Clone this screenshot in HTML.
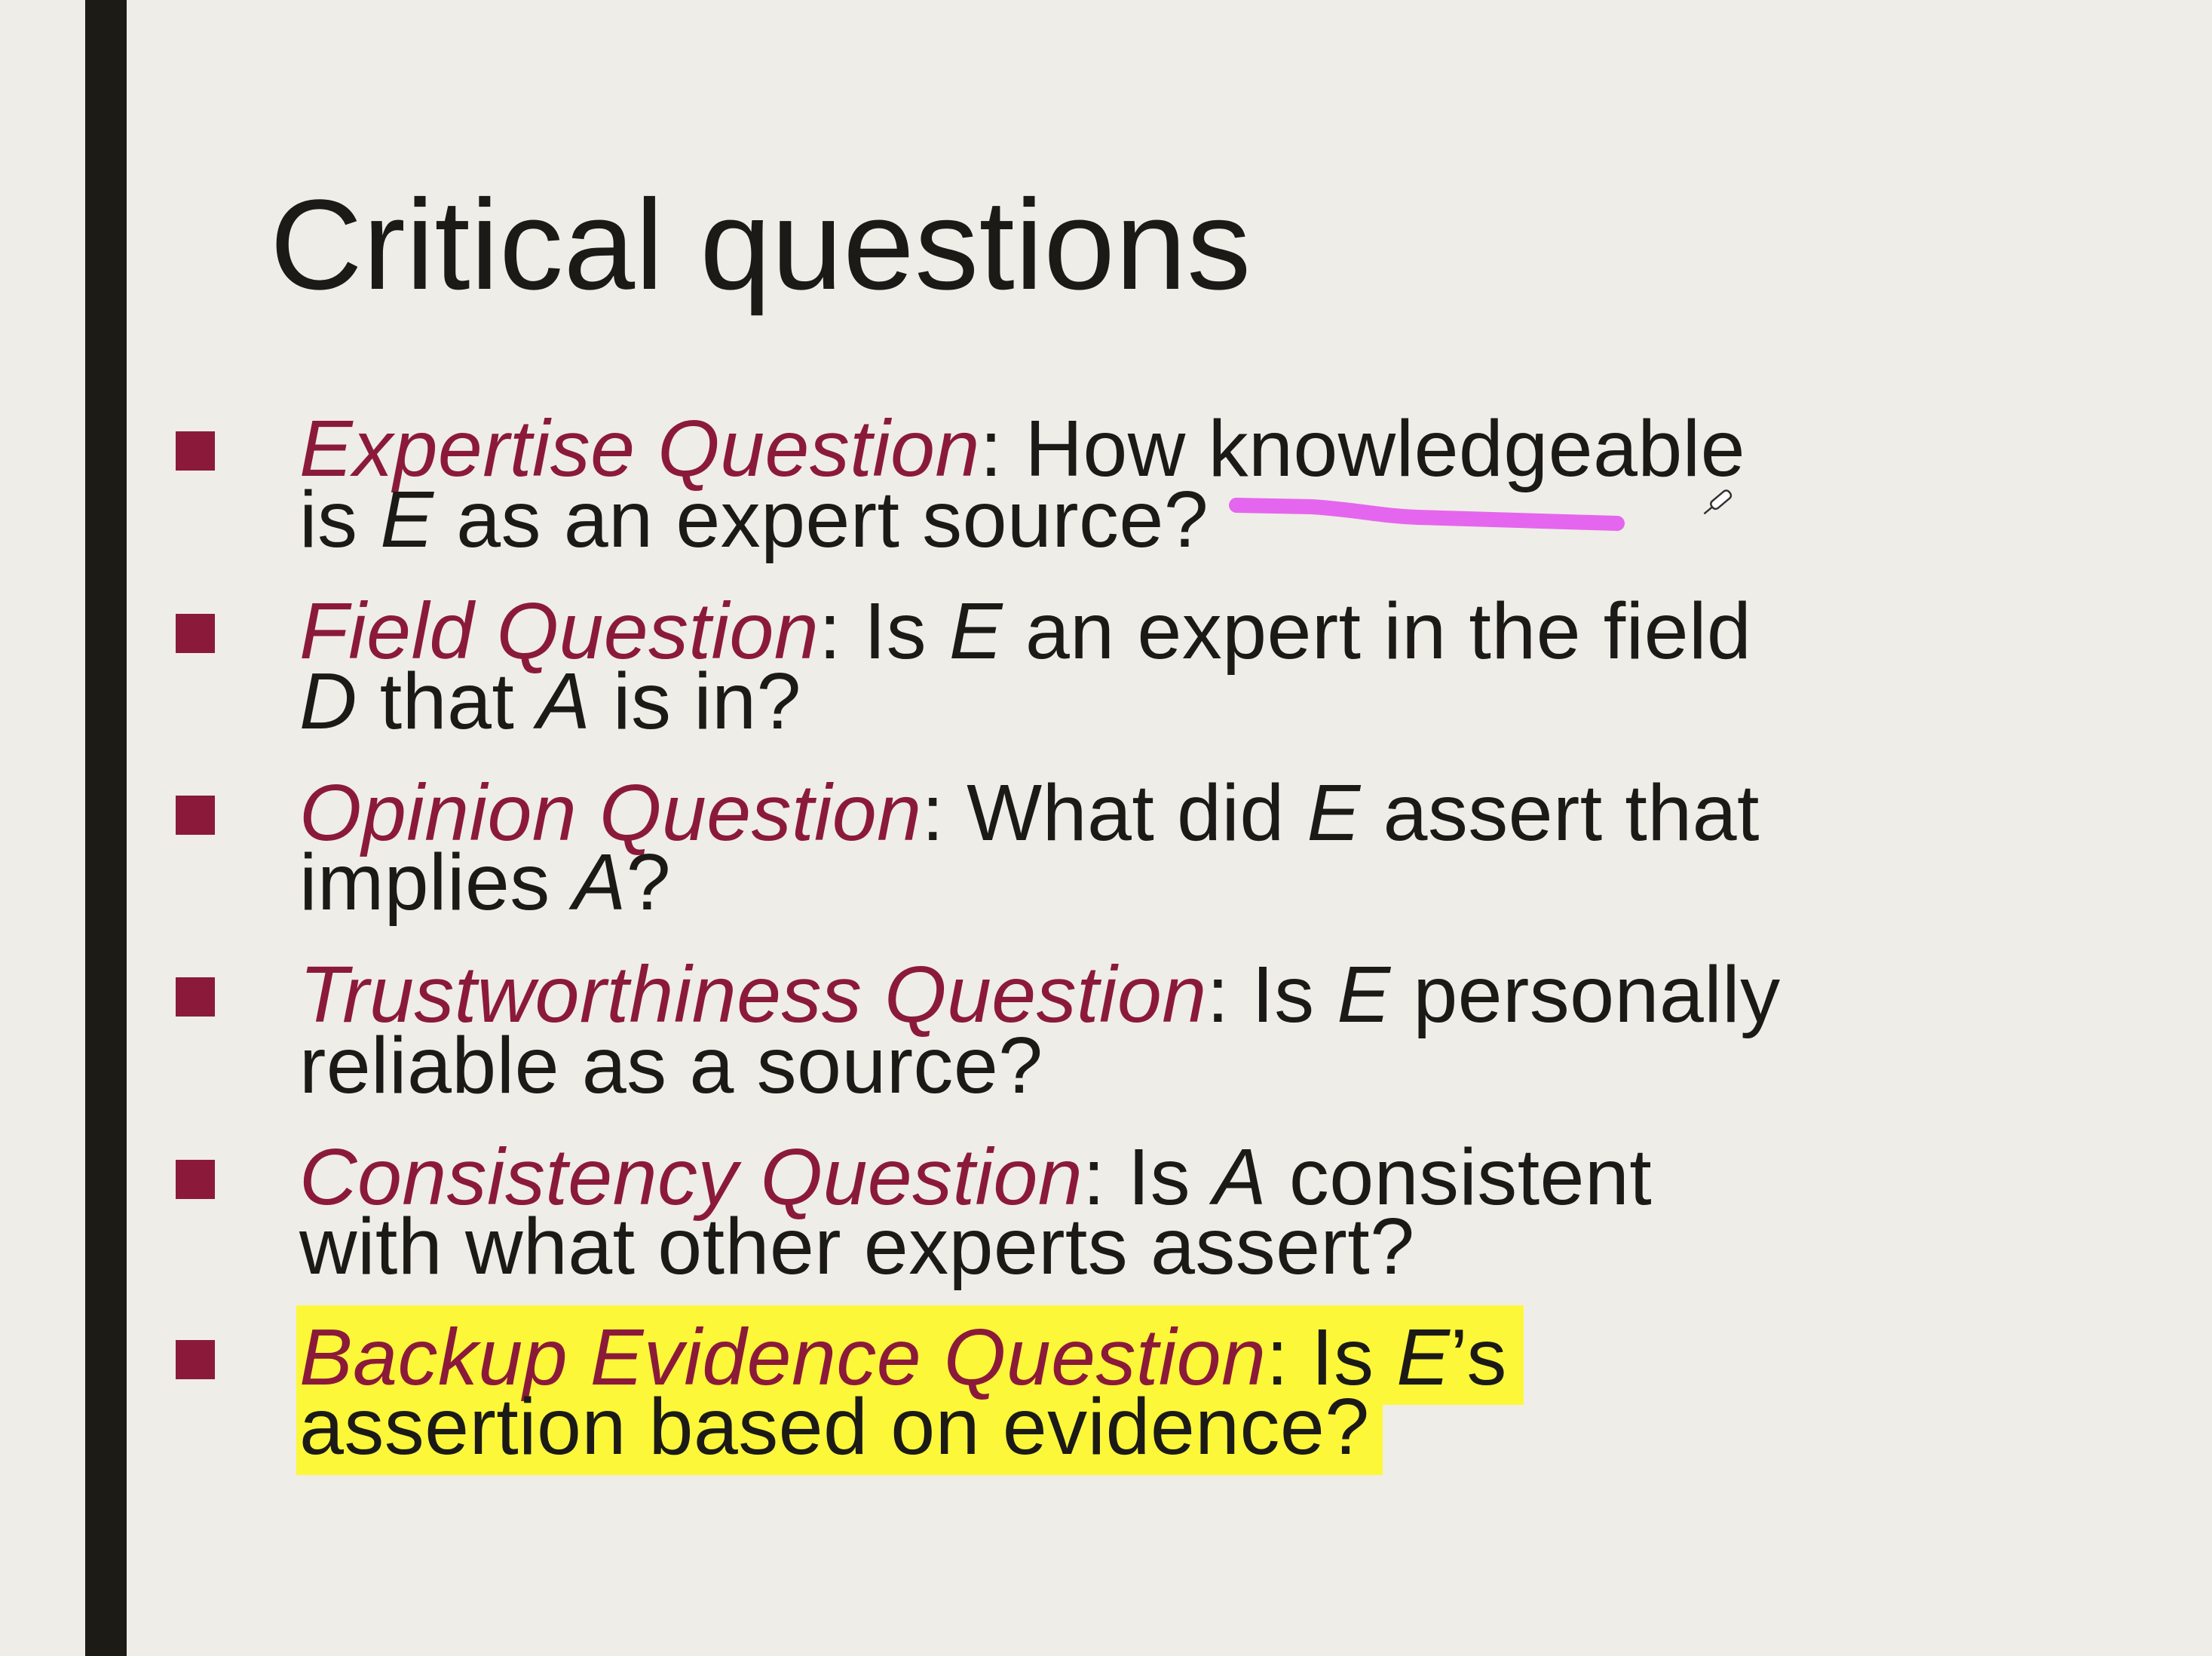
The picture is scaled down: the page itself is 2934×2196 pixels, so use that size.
<!DOCTYPE html>
<html><head><meta charset="utf-8"><style>
html,body{margin:0;padding:0}
body{width:2934px;height:2196px;background:#efede7;position:relative;overflow:hidden;font-family:"Liberation Sans",sans-serif;color:#1b1a17}
.bar{position:absolute;left:113px;top:0;width:55px;height:2196px;background:#1c1b16}
.t{position:absolute;left:358px;top:240px;font-size:170px;line-height:170px;white-space:nowrap;letter-spacing:0.4px}
.l{position:absolute;left:397px;font-size:106px;line-height:106px;white-space:nowrap;letter-spacing:0.4px}
.r{color:#8b1a3a;font-style:italic}
i{font-style:italic}
.sq{position:absolute;left:233px;width:52px;height:52px;background:#8b1a3a}
.hl{position:absolute;background:#fdf73a}
</style></head><body>
<div class="bar"></div>
<div class="t">Critical questions</div>
<div class="hl" style="left:393px;top:1731px;width:1628px;height:132px"></div>
<div class="hl" style="left:393px;top:1862px;width:1441px;height:94px"></div>
<svg style="position:absolute;left:0;top:0" width="2934" height="2196">
<path d="M1640 670 L1740 672 C1800 676 1830 684 1880 686 L2145 694" stroke="#e566ee" stroke-width="20" fill="none" stroke-linecap="round"/>
<g transform="translate(2277,670) rotate(-40)" stroke="#333" stroke-width="2.5" fill="#fff">
<rect x="-6" y="-8" width="30" height="12" rx="5"/>
<line x1="-6" y1="-2" x2="-20" y2="-2"/>
</g>
</svg>
<div class="sq" style="top:572px"></div>
<div class="sq" style="top:814px"></div>
<div class="sq" style="top:1055px"></div>
<div class="sq" style="top:1296px"></div>
<div class="sq" style="top:1538px"></div>
<div class="sq" style="top:1777px"></div>
<div class="l" style="top:542px"><span class="r">Expertise Question</span>: How knowledgeable</div>
<div class="l" style="top:636px">is <i>E</i> as an expert source?</div>
<div class="l" style="top:784px"><span class="r">Field Question</span>: Is <i>E</i> an expert in the field</div>
<div class="l" style="top:877px"><i>D</i> that <i>A</i> is in?</div>
<div class="l" style="top:1025px"><span class="r">Opinion Question</span>: What did <i>E</i> assert that</div>
<div class="l" style="top:1117px">implies <i>A</i>?</div>
<div class="l" style="top:1266px"><span class="r">Trustworthiness Question</span>: Is <i>E</i> personally</div>
<div class="l" style="top:1360px">reliable as a source?</div>
<div class="l" style="top:1508px"><span class="r">Consistency Question</span>: Is <i>A</i> consistent</div>
<div class="l" style="top:1600px">with what other experts assert?</div>
<div class="l" style="top:1747px"><span class="r">Backup Evidence Question</span>: Is <i>E</i>’s</div>
<div class="l" style="top:1839px">assertion based on evidence?</div>
</body></html>
